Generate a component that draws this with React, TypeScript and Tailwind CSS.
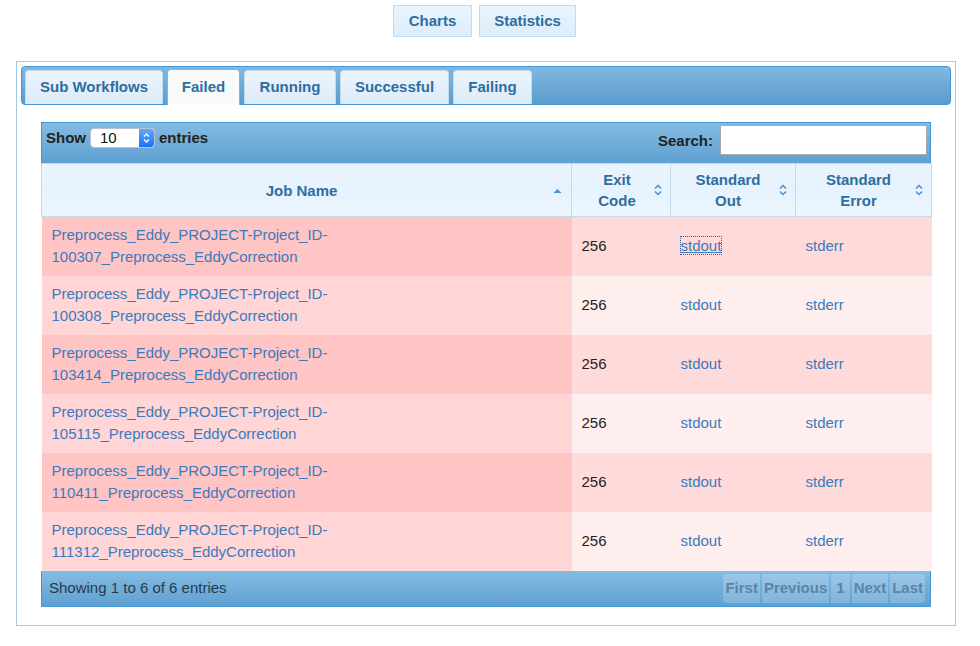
import React from 'react';

const jobs = ['100307', '100308', '103414', '105115', '110411', '111312'];

const tabs = [
    { label: 'Sub Workflows', w: 'w-[138px]' },
    { label: 'Failed', w: 'w-[73px]', active: true },
    { label: 'Running', w: 'w-[92px]' },
    { label: 'Successful', w: 'w-[109px]' },
    { label: 'Failing', w: 'w-[79px]' },
];

function SortBoth() {
    return (
        <svg width="8" height="12" viewBox="0 0 8 12" className="absolute right-[8px] top-1/2 -translate-y-1/2">
            <path d="M1 4.5 L4 1.5 L7 4.5" fill="none" stroke="#4a8fd0" strokeWidth="1.5" />
            <path d="M1 7.5 L4 10.5 L7 7.5" fill="none" stroke="#4a8fd0" strokeWidth="1.5" />
        </svg>
    );
}

function SortAsc() {
    return (
        <svg width="9" height="6" viewBox="0 0 9 6" className="absolute right-[9px] top-[24px]">
            <path d="M0.5 5 L4.5 1 L8.5 5 Z" fill="#4a8fd0" />
        </svg>
    );
}

export default function App() {
    return (
        <div className="min-h-[646px] bg-white text-[15px] text-[#222]" style={{ fontFamily: '"Liberation Sans", Arial, sans-serif' }}>
            <div className="flex justify-center gap-[7px] pr-[11px] pt-[5px]">
                <button className="h-[32px] w-[79px] border border-[#c5dbec] bg-gradient-to-b from-[#eaf4fe] to-[#ddedfb] font-bold text-[#2e6e9e]">
                    Charts
                </button>
                <button className="h-[32px] w-[97px] border border-[#c5dbec] bg-gradient-to-b from-[#eaf4fe] to-[#ddedfb] font-bold text-[#2e6e9e]">
                    Statistics
                </button>
            </div>

            <div className="mx-[16px] mt-[24px] h-[565px] w-[940px] border border-[#a6c9e2] p-[4px]">
                <div className="flex h-[39px] items-end gap-[4px] rounded-[4px] border border-[#4297d7] bg-gradient-to-b from-[#7fb8e2] to-[#5c9ccc] px-[3px]">
                    {tabs.map((t) => (
                        <div
                            key={t.label}
                            className={
                                t.active
                                    ? `${t.w} -mb-px flex h-[36px] items-center justify-center rounded-t-[4px] border border-b-0 border-[#79b7e7] bg-[#f8fafc] font-bold text-[#2e6e9e]`
                                    : `${t.w} flex h-[34px] items-center justify-center rounded-t-[4px] border border-b-0 border-[#c5dbec] bg-gradient-to-b from-[#ebf4fd] to-[#dcecfb] font-bold text-[#2e6e9e]`
                            }
                        >
                            {t.label}
                        </div>
                    ))}
                </div>

                <div className="px-[20px] pt-[17px]">
                    <div className="flex h-[41px] items-start justify-between border border-[#4297d7] border-b-0 bg-gradient-to-b from-[#84bbe2] to-[#5fa0d2] pl-[4px] pr-[3px]">
                        <div className="mt-[4px] flex items-center font-bold">
                            <span>Show</span>
                            <div className="ml-[4px] mr-[4px] flex h-[20px] w-[65px] items-center overflow-hidden rounded-[4px] border border-[#b9c3cf] bg-white">
                                <span className="flex-1 pl-[9px] text-[15px] font-normal text-[#111]">10</span>
                                <div className="flex h-full w-[15px] items-center justify-center rounded-r-[3px] bg-gradient-to-b from-[#5fa8ff] to-[#1a72f0]">
                                    <svg width="7" height="12" viewBox="0 0 7 12">
                                        <path d="M1 4.5 L3.5 2 L6 4.5" fill="none" stroke="white" strokeWidth="1.3" />
                                        <path d="M1 7.5 L3.5 10 L6 7.5" fill="none" stroke="white" strokeWidth="1.3" />
                                    </svg>
                                </div>
                            </div>
                            <span>entries</span>
                        </div>
                        <div className="mt-[2px] flex items-center font-bold">
                            <span className="mr-[7px] mt-[3px]">Search:</span>
                            <input className="h-[30px] w-[207px] border border-[#a9a9a9] bg-white outline-none" />
                        </div>
                    </div>

                    <table className="w-[890px] table-fixed border-collapse">
                        <colgroup>
                            <col className="w-[530px]" />
                            <col className="w-[99px]" />
                            <col className="w-[125px]" />
                            <col className="w-[136px]" />
                        </colgroup>
                        <thead>
                            <tr className="h-[53px] bg-gradient-to-b from-[#eaf4fe] via-[#e6f2fd] to-[#eef6fe] font-bold text-[#2e6e9e]">
                                <th className="relative border border-[#c5dbec] pr-[10px] leading-[21px]">
                                    Job Name
                                    <SortAsc />
                                </th>
                                <th className="relative border border-[#c5dbec] pr-[8px] leading-[21px]">
                                    Exit
                                    <br />
                                    Code
                                    <SortBoth />
                                </th>
                                <th className="relative border border-[#c5dbec] pr-[10px] leading-[21px]">
                                    Standard
                                    <br />
                                    Out
                                    <SortBoth />
                                </th>
                                <th className="relative border border-[#c5dbec] pr-[10px] leading-[21px]">
                                    Standard
                                    <br />
                                    Error
                                    <SortBoth />
                                </th>
                            </tr>
                        </thead>
                        <tbody>
                            {jobs.map((id, i) => {
                                const odd = i % 2 === 0;
                                return (
                                    <tr key={id} className={odd ? 'h-[59px] bg-[#ffdada]' : 'h-[59px] bg-[#ffeeee]'}>
                                        <td className={odd ? 'bg-[#ffc4c4] pl-[10px] leading-[22px]' : 'bg-[#ffd5d5] pl-[10px] leading-[22px]'}>
                                            <a className="text-[#3a7bbf]">
                                                Preprocess_Eddy_PROJECT-Project_ID-
                                                <br />
                                                {id}_Preprocess_EddyCorrection
                                            </a>
                                        </td>
                                        <td className="pl-[10px]">256</td>
                                        <td className="pl-[10px]">
                                            <a className={i === 0 ? 'text-[#3a7bbf] underline outline outline-1 outline-dotted outline-[#3a5f8f]' : 'text-[#3a7bbf]'}>
                                                stdout
                                            </a>
                                        </td>
                                        <td className="pl-[10px]">
                                            <a className="text-[#3a7bbf]">stderr</a>
                                        </td>
                                    </tr>
                                );
                            })}
                        </tbody>
                    </table>

                    <div className="flex h-[36px] items-center justify-between border border-[#4297d7] border-t-0 bg-gradient-to-b from-[#84bbe2] to-[#5fa0d2] pl-[7px] pr-[5px]">
                        <span className="text-[#2a3a4a]">Showing 1 to 6 of 6 entries</span>
                        <div className="flex gap-[2px] font-bold text-[#5b84a8]">
                            <span className="flex h-[29px] items-center rounded-l-[3px] bg-white/20 px-[2px]">First</span>
                            <span className="flex h-[29px] items-center bg-white/20 px-[2px]">Previous</span>
                            <span className="flex h-[29px] items-center bg-white/20 px-[5px]">1</span>
                            <span className="flex h-[29px] items-center bg-white/20 px-[2px]">Next</span>
                            <span className="flex h-[29px] items-center rounded-r-[3px] bg-white/20 px-[2px]">Last</span>
                        </div>
                    </div>
                </div>
            </div>
        </div>
    );
}
